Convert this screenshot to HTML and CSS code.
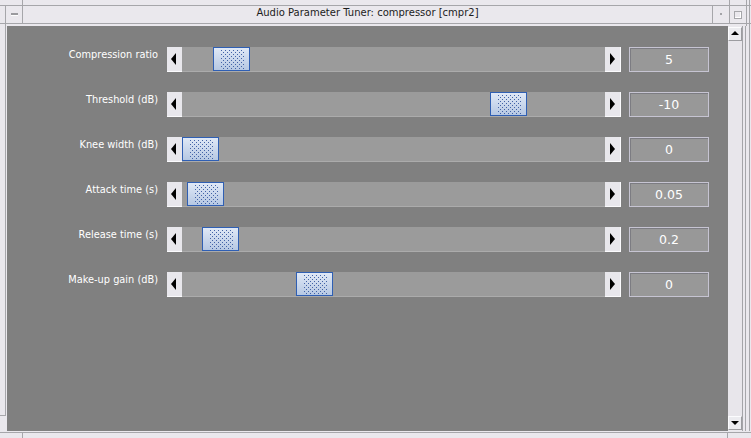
FILE: index.html
```html
<!DOCTYPE html>
<html>
<head>
<meta charset="utf-8">
<title>Audio Parameter Tuner</title>
<link rel="stylesheet" href="styles.css">
</head>
<body>
<div class="frame">
  <div class="titlebar">
    <div class="tb-menu"><span class="dash"></span></div>
    <div class="tb-title">Audio Parameter Tuner: compressor [cmpr2]</div>
    <div class="tb-icon"><span class="dot"></span></div>
    <div class="tb-max"><span class="sq"></span></div>
    <div class="tb-right"></div>
  </div>
  <div class="main">
    <div class="lside"></div>
    <div class="content">
      <div class="row">
        <div class="label">Compression ratio</div>
        <div class="slider">
          <div class="arrow left"><svg width="15" height="24"><polygon points="4,12 9,6 9,18" fill="#000"/></svg></div>
          <div class="track"><div class="thumb" style="left:31px"><svg class="dots"><rect width="100%" height="100%" fill="url(#dots)"/></svg></div></div>
          <div class="arrow right"><svg width="15" height="24"><polygon points="5,6 10,12 5,18" fill="#000"/></svg></div>
        </div>
        <div class="value">5</div>
      </div>
      <div class="row">
        <div class="label">Threshold (dB)</div>
        <div class="slider">
          <div class="arrow left"><svg width="15" height="24"><polygon points="4,12 9,6 9,18" fill="#000"/></svg></div>
          <div class="track"><div class="thumb" style="left:308px"><svg class="dots"><rect width="100%" height="100%" fill="url(#dots)"/></svg></div></div>
          <div class="arrow right"><svg width="15" height="24"><polygon points="5,6 10,12 5,18" fill="#000"/></svg></div>
        </div>
        <div class="value">-10</div>
      </div>
      <div class="row">
        <div class="label">Knee width (dB)</div>
        <div class="slider">
          <div class="arrow left"><svg width="15" height="24"><polygon points="4,12 9,6 9,18" fill="#000"/></svg></div>
          <div class="track"><div class="thumb" style="left:0px"><svg class="dots"><rect width="100%" height="100%" fill="url(#dots)"/></svg></div></div>
          <div class="arrow right"><svg width="15" height="24"><polygon points="5,6 10,12 5,18" fill="#000"/></svg></div>
        </div>
        <div class="value">0</div>
      </div>
      <div class="row">
        <div class="label">Attack time (s)</div>
        <div class="slider">
          <div class="arrow left"><svg width="15" height="24"><polygon points="4,12 9,6 9,18" fill="#000"/></svg></div>
          <div class="track"><div class="thumb" style="left:5px"><svg class="dots"><rect width="100%" height="100%" fill="url(#dots)"/></svg></div></div>
          <div class="arrow right"><svg width="15" height="24"><polygon points="5,6 10,12 5,18" fill="#000"/></svg></div>
        </div>
        <div class="value">0.05</div>
      </div>
      <div class="row">
        <div class="label">Release time (s)</div>
        <div class="slider">
          <div class="arrow left"><svg width="15" height="24"><polygon points="4,12 9,6 9,18" fill="#000"/></svg></div>
          <div class="track"><div class="thumb" style="left:20px"><svg class="dots"><rect width="100%" height="100%" fill="url(#dots)"/></svg></div></div>
          <div class="arrow right"><svg width="15" height="24"><polygon points="5,6 10,12 5,18" fill="#000"/></svg></div>
        </div>
        <div class="value">0.2</div>
      </div>
      <div class="row">
        <div class="label">Make-up gain (dB)</div>
        <div class="slider">
          <div class="arrow left"><svg width="15" height="24"><polygon points="4,12 9,6 9,18" fill="#000"/></svg></div>
          <div class="track"><div class="thumb" style="left:114px"><svg class="dots"><rect width="100%" height="100%" fill="url(#dots)"/></svg></div></div>
          <div class="arrow right"><svg width="15" height="24"><polygon points="5,6 10,12 5,18" fill="#000"/></svg></div>
        </div>
        <div class="value">0</div>
      </div>
    </div>
    <div class="vscroll">
      <div class="sb-btn"><svg width="12" height="12"><polygon points="2,7 10,7 6,3" fill="#000"/></svg></div>
      <div class="sb-track"></div>
      <div class="sb-btn"><svg width="12" height="12"><polygon points="2,4 10,4 6,8" fill="#000"/></svg></div>
    </div>
    <div class="rside"></div>
  </div>
  <div class="bottom"></div>
</div>
<svg class="defs" width="0" height="0">
  <defs>
    <pattern id="dots" width="4" height="4" patternUnits="userSpaceOnUse">
      <rect x="0" y="0" width="1" height="1" fill="#4262a6"/>
      <rect x="2" y="2" width="1" height="1" fill="#4262a6"/>
    </pattern>
  </defs>
</svg>
</body>
</html>
```

FILE: styles.css
```css
* { box-sizing: border-box; margin: 0; padding: 0; }
html, body { width: 751px; height: 438px; overflow: hidden; }
body { background: #eae8ed; font-family: "DejaVu Sans", "Liberation Sans", sans-serif; }

.frame { width: 751px; height: 438px; display: flex; flex-direction: column; background: #eae8ed; }

/* title bar */
.titlebar {
  height: 26px; display: flex;
  background:
    linear-gradient(#a6a6aa, #a6a6aa) 0 5px / 100% 1px no-repeat,
    linear-gradient(#a6a6aa, #a6a6aa) 0 23px / 100% 1px no-repeat;
}
.tb-menu {
  width: 23px; display: flex; align-items: flex-start;
  background:
    linear-gradient(#a6a6aa, #a6a6aa) 5px 5px / 1px 21px no-repeat,
    linear-gradient(#a6a6aa, #a6a6aa) 22px 0 / 1px 24px no-repeat;
}
.dash { margin: 13px 0 0 11px; width: 7px; height: 2px; background: #9a9a9e; box-shadow: 0 1px 0 #fdfdfd; }
.tb-title { width: 689px; text-align: center; font-size: 10px; line-height: 26px; color: #1c1c1c; white-space: nowrap; }
.tb-icon {
  width: 17px; display: flex; align-items: flex-start;
  background: linear-gradient(#a6a6aa, #a6a6aa) 0 6px / 1px 17px no-repeat;
}
.dot { margin: 13px 0 0 8px; width: 2px; height: 2px; background: #a4a4a8; }
.tb-max {
  width: 17px; display: flex; align-items: flex-start;
  background: linear-gradient(#a6a6aa, #a6a6aa) 0 0 / 1px 24px no-repeat;
}
.sq { margin: 11px 0 0 5px; width: 8px; height: 8px; border: 1px solid #a6a6aa; box-shadow: inset -1px -1px 0 #fff; }
.tb-right {
  width: 5px;
  background:
    linear-gradient(#a6a6aa, #a6a6aa) 0 0 / 1px 26px no-repeat,
    linear-gradient(#a6a6aa, #a6a6aa) 3px 0 / 1px 26px no-repeat;
}

/* main area */
.main { height: 405px; display: flex; }
.lside {
  width: 7px;
  background:
    linear-gradient(#a6a6aa, #a6a6aa) 5px 0 / 1px 389px no-repeat,
    linear-gradient(#a6a6aa, #a6a6aa) 0 389px / 6px 1px no-repeat;
}
.content {
  width: 721px; background: #808080;
  padding-top: 21px; display: flex; flex-direction: column; gap: 20px;
}
.row { display: flex; height: 25px; }
.label { width: 151px; text-align: right; color: #fff; font-size: 9.8px; line-height: 15px; white-space: nowrap; }
.slider { margin-left: 9px; width: 454px; height: 25px; display: flex; }
.arrow { width: 15px; height: 25px; background: #e8e7ec; border-bottom: 1px solid #fbfbfd; }
.arrow svg { display: block; }
.arrow.right { width: 16px; border-right: 1px solid #fbfbfd; }
.track { position: relative; width: 423px; height: 25px; background: #9b9b9b; border-bottom: 1px solid #ababab; }
.thumb {
  position: absolute; top: 0; width: 37px; height: 24px;
  border: 1px solid #2f5fb3;
  background: linear-gradient(#dfe8f6, #b6c8e3);
}
.dots { position: absolute; left: 7px; top: 2px; width: 23px; height: 19px; }
.value {
  margin-left: 8px; width: 80px; height: 25px;
  border: 1px solid #c6c4d2; background: #989898;
  box-shadow: inset 1px 1px 0 #7c7c82;
  color: #fff; font-size: 12.5px; line-height: 23px; text-align: center;
}

/* scrollbar */
.vscroll { width: 15px; padding: 1px 0 1px 0; display: flex; flex-direction: column; border-right: 1px solid #a4a4a8; }
.sb-btn {
  width: 14px; height: 14px; background: #ececf0;
  border: 1px solid; border-color: #fcfcfe #9c9ca0 #9c9ca0 #fcfcfe;
}
.sb-btn svg { display: block; }
.sb-track { flex: 1; background: #e8e6eb; }
.rside {
  width: 8px;
  background:
    linear-gradient(#a6a6aa, #a6a6aa) 2px 0 / 1px 100% no-repeat,
    linear-gradient(#a6a6aa, #a6a6aa) 6px 0 / 1px 100% no-repeat;
}

.bottom {
  height: 7px;
  background:
    linear-gradient(#a6a6aa, #a6a6aa) 0 1px / 100% 1px no-repeat,
    linear-gradient(#a6a6aa, #a6a6aa) 22px 2px / 1px 5px no-repeat,
    linear-gradient(#a6a6aa, #a6a6aa) 727px 2px / 1px 5px no-repeat;
}

.defs { position: absolute; width: 0; height: 0; }
```
